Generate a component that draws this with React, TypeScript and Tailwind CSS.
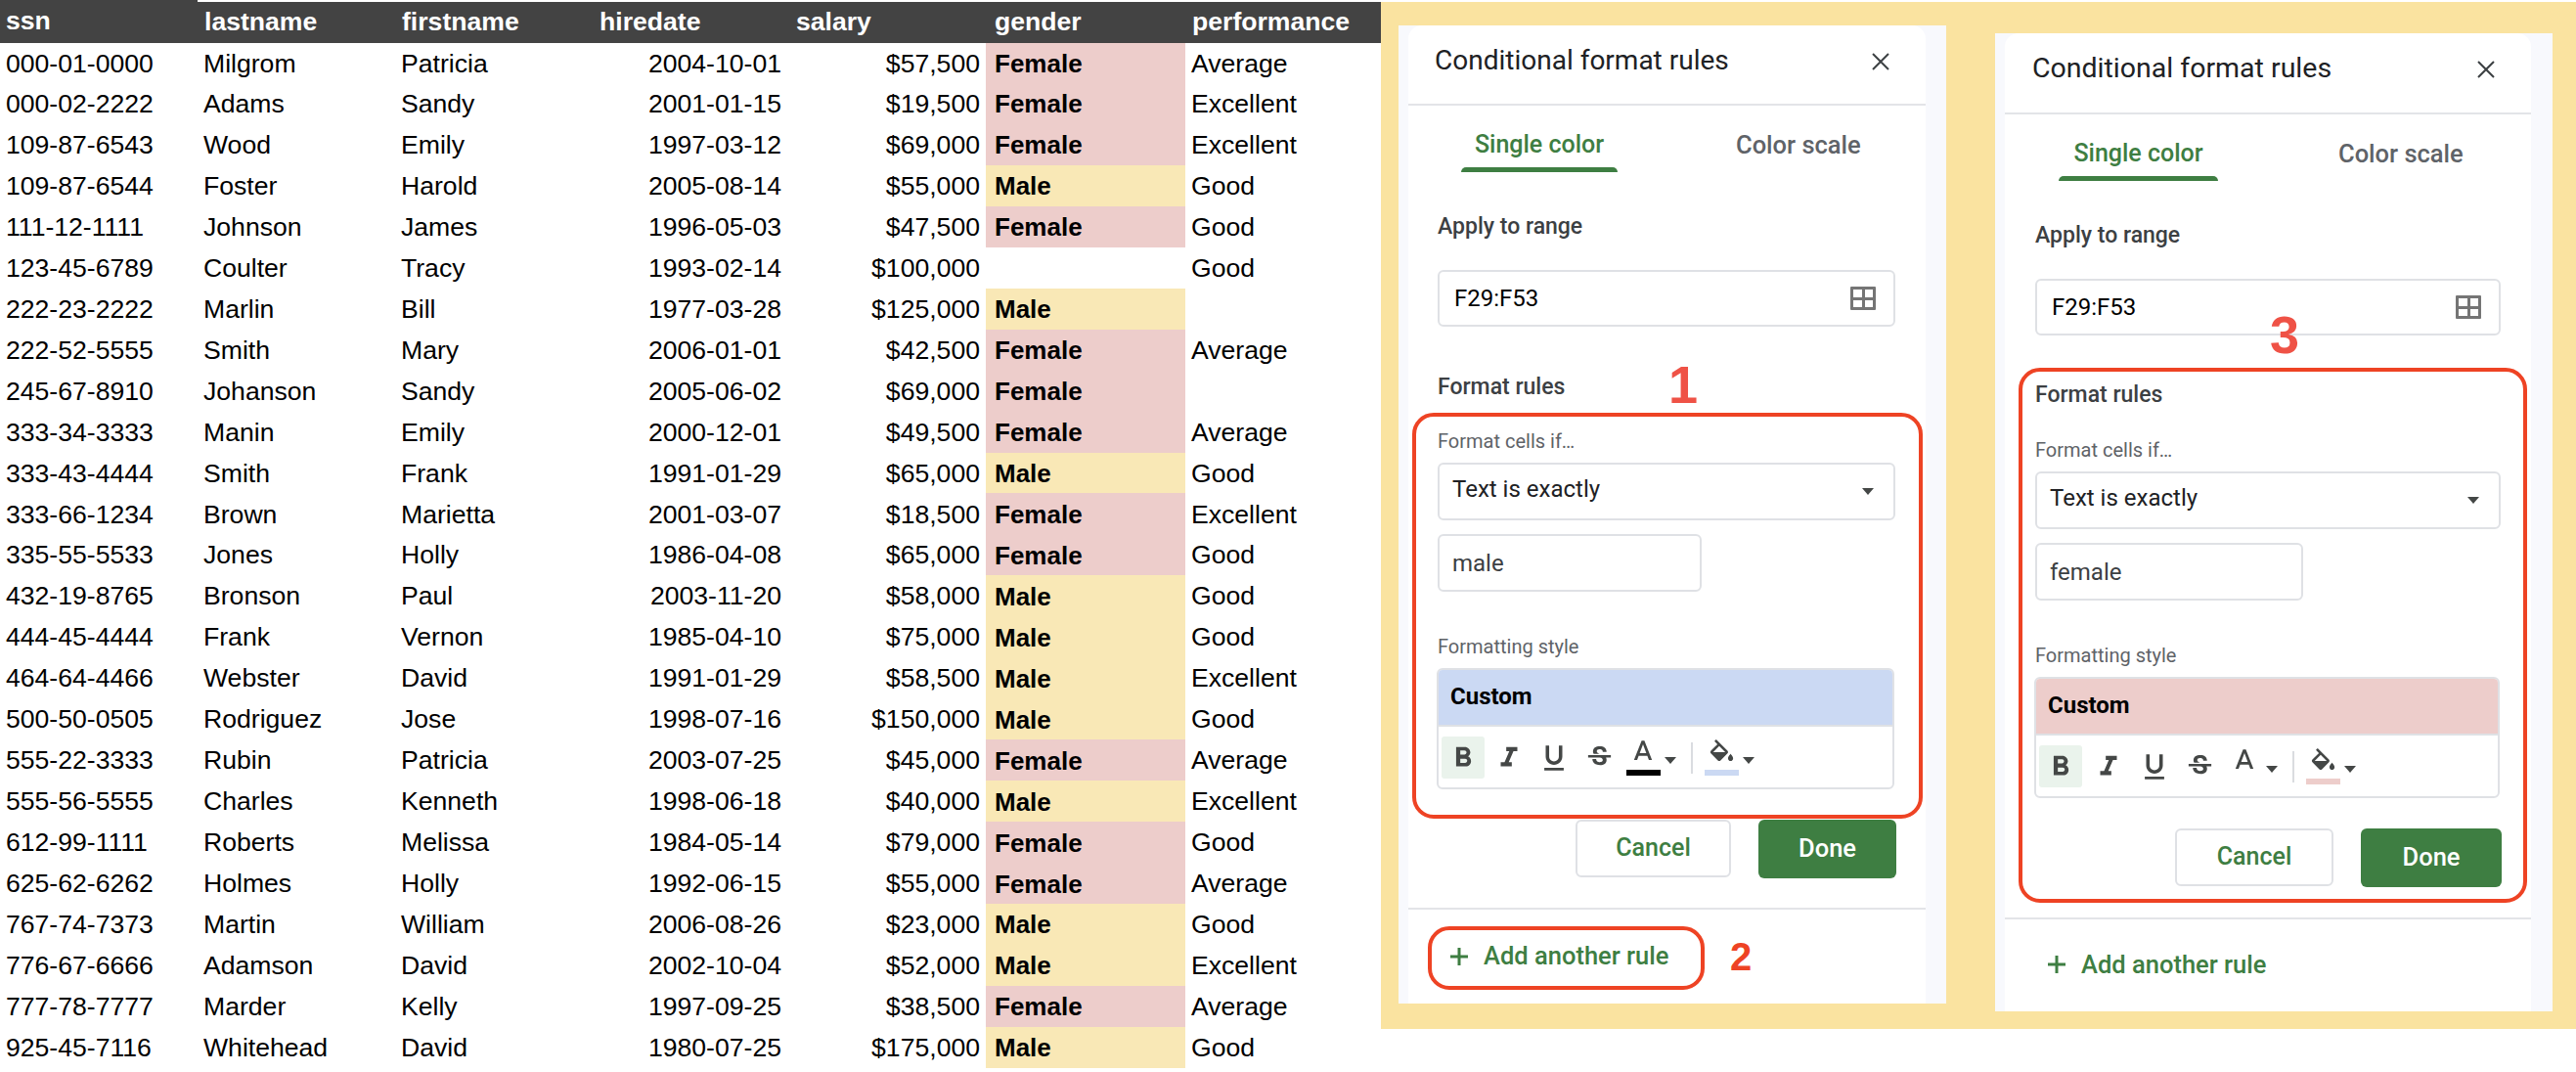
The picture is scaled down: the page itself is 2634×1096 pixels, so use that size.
/**
 * Spreadsheet with two "Conditional format rules" side panels on a yellow band.
 */

import React from 'react';

type Row = [string, string, string, string, string, string, string];

const rows: Row[] = [
  ['000-01-0000', 'Milgrom', 'Patricia', '2004-10-01', '$57,500', 'Female', 'Average'],
  ['000-02-2222', 'Adams', 'Sandy', '2001-01-15', '$19,500', 'Female', 'Excellent'],
  ['109-87-6543', 'Wood', 'Emily', '1997-03-12', '$69,000', 'Female', 'Excellent'],
  ['109-87-6544', 'Foster', 'Harold', '2005-08-14', '$55,000', 'Male', 'Good'],
  ['111-12-1111', 'Johnson', 'James', '1996-05-03', '$47,500', 'Female', 'Good'],
  ['123-45-6789', 'Coulter', 'Tracy', '1993-02-14', '$100,000', '', 'Good'],
  ['222-23-2222', 'Marlin', 'Bill', '1977-03-28', '$125,000', 'Male', ''],
  ['222-52-5555', 'Smith', 'Mary', '2006-01-01', '$42,500', 'Female', 'Average'],
  ['245-67-8910', 'Johanson', 'Sandy', '2005-06-02', '$69,000', 'Female', ''],
  ['333-34-3333', 'Manin', 'Emily', '2000-12-01', '$49,500', 'Female', 'Average'],
  ['333-43-4444', 'Smith', 'Frank', '1991-01-29', '$65,000', 'Male', 'Good'],
  ['333-66-1234', 'Brown', 'Marietta', '2001-03-07', '$18,500', 'Female', 'Excellent'],
  ['335-55-5533', 'Jones', 'Holly', '1986-04-08', '$65,000', 'Female', 'Good'],
  ['432-19-8765', 'Bronson', 'Paul', '2003-11-20', '$58,000', 'Male', 'Good'],
  ['444-45-4444', 'Frank', 'Vernon', '1985-04-10', '$75,000', 'Male', 'Good'],
  ['464-64-4466', 'Webster', 'David', '1991-01-29', '$58,500', 'Male', 'Excellent'],
  ['500-50-0505', 'Rodriguez', 'Jose', '1998-07-16', '$150,000', 'Male', 'Good'],
  ['555-22-3333', 'Rubin', 'Patricia', '2003-07-25', '$45,000', 'Female', 'Average'],
  ['555-56-5555', 'Charles', 'Kenneth', '1998-06-18', '$40,000', 'Male', 'Excellent'],
  ['612-99-1111', 'Roberts', 'Melissa', '1984-05-14', '$79,000', 'Female', 'Good'],
  ['625-62-6262', 'Holmes', 'Holly', '1992-06-15', '$55,000', 'Female', 'Average'],
  ['767-74-7373', 'Martin', 'William', '2006-08-26', '$23,000', 'Male', 'Good'],
  ['776-67-6666', 'Adamson', 'David', '2002-10-04', '$52,000', 'Male', 'Excellent'],
  ['777-78-7777', 'Marder', 'Kelly', '1997-09-25', '$38,500', 'Female', 'Average'],
  ['925-45-7116', 'Whitehead', 'David', '1980-07-25', '$175,000', 'Male', 'Good'],
];

const headers = ['ssn', 'lastname', 'firstname', 'hiredate', 'salary', 'gender', 'performance'];
const gridCols = 'grid grid-cols-[202px_202px_202px_198px_204px_204px_200px]';

function Sheet() {
  return (
    <div className="w-[1412px] shrink-0 font-['Liberation_Sans',sans-serif] text-[26.6px] text-black">
      {/* Header row */}
      <div className={`${gridCols} h-[44px] font-bold text-white`}>
        {headers.map((h, i) => (
          <div
            key={h}
            className={`flex items-center bg-[#434343] ${i === 0 ? 'pl-[6px]' : 'mt-[2px] pl-[7px]'} ${i === 3 ? 'pl-[6px]' : ''} ${i === 4 ? 'pl-[10px]' : ''} ${i === 5 ? 'pl-[9px]' : ''}`}
          >
            {h}
          </div>
        ))}
      </div>
      {/* Data rows, the first is a pixel shorter in the picture */}
      {rows.map((r, i) => {
        const cell = 'flex items-center pt-[2px]';
        return (
          <div key={r[0]} className={`${gridCols} ${i === 0 ? 'h-[40.96px]' : 'h-[41.96px]'} items-stretch`}>
            <div className={`${cell} pl-[6px]`}>{r[0]}</div>
            <div className={`${cell} pl-[6px]`}>{r[1]}</div>
            <div className={`${cell} pl-[6px]`}>{r[2]}</div>
            <div className={`${cell} justify-end pr-[5px]`}>{r[3]}</div>
            <div className={`${cell} justify-end pr-[6px]`}>{r[4]}</div>
            <div
              className={`${cell} pl-[9px] text-[26px] font-bold ${
                r[5] === 'Female' ? 'bg-[#edcdcb]' : r[5] === 'Male' ? 'bg-[#f9e8b6]' : ''
              }`}
            >
              {r[5]}
            </div>
            <div className={`${cell} pl-[6px]`}>{r[6]}</div>
          </div>
        );
      })}
    </div>
  );
}

function Icon({ d, className }: { d: string; className: string }) {
  return (
    <svg viewBox="0 0 24 24" className={className} fill="currentColor">
      <path d={d} fillRule="evenodd" />
    </svg>
  );
}

const BOLD = 'M15.6 10.79c.97-.67 1.65-1.77 1.65-2.79 0-2.26-1.75-4-4-4H7v14h7.04c2.09 0 3.71-1.7 3.71-3.79 0-1.52-.86-2.82-2.15-3.42zM10 6.5h3c.83 0 1.5.67 1.5 1.5s-.67 1.5-1.5 1.5h-3v-3zm3.5 9H10v-3h3.5c.83 0 1.5.67 1.5 1.5s-.67 1.5-1.5 1.5z';
const ITALIC = 'M10 4v3h2.21l-3.42 8H6v3h8v-3h-2.21l3.42-8H18V4z';
const UNDERLINE = 'M12 17c3.31 0 6-2.69 6-6V3h-2.5v8c0 1.93-1.57 3.5-3.5 3.5S8.5 12.93 8.5 11V3H6v8c0 3.31 2.69 6 6 6zm-7 2v2h14v-2H5z';
const STRIKE = 'M7.24 8.75c-.26-.48-.39-1.03-.39-1.67 0-.61.13-1.16.4-1.67.26-.5.63-.93 1.11-1.29.48-.35 1.05-.63 1.7-.83.66-.19 1.39-.29 2.18-.29.81 0 1.54.11 2.21.34.66.22 1.23.54 1.69.94.47.4.83.88 1.08 1.43.25.55.38 1.15.38 1.81h-3.01c0-.31-.05-.59-.15-.85-.09-.27-.24-.49-.44-.68-.2-.19-.45-.33-.75-.44-.3-.1-.66-.16-1.06-.16-.39 0-.74.04-1.03.13-.29.09-.53.21-.72.36-.19.16-.34.34-.44.55-.1.21-.15.43-.15.66 0 .48.25.88.74 1.21.38.25.77.48 1.41.7H7.39c-.05-.08-.11-.17-.15-.25zM21 12v-2H3v2h9.62c.18.07.4.14.55.2.37.17.66.34.87.51.21.17.35.36.43.57.07.2.11.43.11.69 0 .23-.05.45-.14.66-.09.2-.23.38-.42.53-.19.15-.42.26-.71.35-.29.08-.63.13-1.01.13-.43 0-.83-.04-1.18-.13s-.66-.23-.91-.42c-.25-.19-.45-.44-.59-.75-.14-.31-.25-.76-.25-1.21H6.4c0 .55.08 1.13.24 1.58.16.45.37.85.65 1.21.28.35.6.66.98.92.37.26.78.48 1.22.65.44.17.9.3 1.38.39.48.08.96.13 1.44.13.8 0 1.53-.09 2.18-.28s1.21-.45 1.67-.79c.46-.34.82-.77 1.07-1.27s.38-1.07.38-1.71c0-.6-.1-1.14-.31-1.61-.05-.11-.11-.23-.17-.33H21z';
const TEXT_A = 'M11 3L5.5 17h2.25l1.12-3h6.25l1.12 3h2.25L13 3h-2zm-1.38 9L12 5.67 14.38 12H9.62z';
const BUCKET = 'M16.56 8.94L7.62 0 6.21 1.41l2.38 2.38-5.15 5.15c-.59.59-.59 1.54 0 2.12l5.5 5.5c.29.29.68.44 1.06.44s.77-.15 1.06-.44l5.5-5.5c.59-.58.59-1.53 0-2.12zM5.21 10L10 5.21 14.79 10H5.21zM19 11.5s-2 2.17-2 3.5c0 1.1.9 2 2 2s2-.9 2-2c0-1.33-2-3.5-2-3.5z';

function Caret({ className = '' }: { className?: string }) {
  return <div className={`h-0 w-0 border-x-[6px] border-t-[7px] border-x-transparent border-t-[#444746] ${className}`} />;
}

function Toolbar({ btn, textSwatch, fillSwatch }: { btn: string; textSwatch: boolean; fillSwatch: string }) {
  return (
    <div className="flex h-[63px] items-center pl-[3px] text-[#444746]">
      <div className={`${btn} h-[43px]`}>
        <div className="flex h-[43px] w-[44px] items-center justify-center rounded-[3px] bg-[#eaf3ec]">
          <Icon d={BOLD} className="h-[34px] w-[34px]" />
        </div>
      </div>
      <div className={`${btn} flex h-[43px] items-center justify-center`}>
        <Icon d={ITALIC} className="h-[34px] w-[34px]" />
      </div>
      <div className={`${btn} flex h-[43px] items-center justify-center`}>
        <Icon d={UNDERLINE} className="h-[34px] w-[34px]" />
      </div>
      <div className={`${btn} flex h-[43px] items-center justify-center`}>
        <Icon d={STRIKE} className="h-[31px] w-[31px]" />
      </div>
      {/* Text colour */}
      <div className="ml-[4px] flex h-[43px] w-[36px] flex-col items-center justify-between pb-[3px]">
        <Icon d={TEXT_A} className="h-[34px] w-[34px]" />
        <div className={`h-[6px] w-[35px] ${textSwatch ? 'bg-black' : ''}`} />
      </div>
      <Caret className="ml-[4px] mt-[6px]" />
      <div className="ml-[15px] h-[32px] w-[2px] bg-[#dadce0]" />
      {/* Fill colour */}
      <div className="ml-[11px] flex h-[43px] w-[36px] flex-col items-center justify-between pb-[3px] pt-[3px]">
        <Icon d={BUCKET} className="h-[31px] w-[31px]" />
        <div className={`h-[6px] w-[35px] ${fillSwatch}`} />
      </div>
      <Caret className="ml-[4px] mt-[6px]" />
    </div>
  );
}

function GridIcon() {
  return (
    <div className="grid h-[24px] w-[26px] grid-cols-2 gap-[3px] rounded-[1px] bg-[#757575] p-[3px]">
      <div className="bg-white" />
      <div className="bg-white" />
      <div className="bg-white" />
      <div className="bg-white" />
    </div>
  );
}

function Field({ children, className }: { children: React.ReactNode; className: string }) {
  return (
    <div className={`flex items-center rounded-[6px] border-2 border-[#dfe1e5] bg-white ${className}`}>
      {children}
    </div>
  );
}

function PanelHeader({ titleClass, height }: { titleClass: string; height: string }) {
  return (
    <div className={`flex items-start justify-between border-b-2 border-[#e3e4e8] ${height}`}>
      <div className={`mt-[18px] leading-[36px] text-[#202124] ${titleClass}`}>Conditional format rules</div>
      <svg viewBox="0 0 18 18" className="mr-[37px] mt-[28px] h-[18px] w-[18px] text-[#3c4043]" stroke="currentColor" strokeWidth="2" fill="none">
        <path d="M1 1l16 16M17 1L1 17" />
      </svg>
    </div>
  );
}

function Tabs({ underline, color }: { underline: string; color: string }) {
  return (
    <div className="flex h-[68px] items-start">
      <div className={`flex h-[68px] flex-col items-center justify-between ${underline}`}>
        <div className="mt-[24px] text-[25px] font-medium leading-[32px] text-[#3e7e42]">Single color</div>
        <div className="h-[5px] w-full rounded-t-[5px] bg-[#3e7e42]" />
      </div>
      <div className={`mt-[24px] text-[25.5px] font-medium leading-[32px] text-[#5f6368] ${color}`}>Color scale</div>
    </div>
  );
}

const labelStrong = 'text-[23px] font-medium leading-[30px] text-[#3c4043]';
const labelMuted = 'text-[20px] leading-[26px] text-[#5f6368]';

function RuleFields({ value, width, inputWidth }: { value: string; width: string; inputWidth: string }) {
  return (
    <>
      <div className={labelMuted}>Format cells if…</div>
      <Field className={`mt-[9px] h-[59px] justify-between pl-[13px] pr-[20px] ${width}`}>
        <span className="pb-[6px] text-[24px] text-[#202124]">Text is exactly</span>
        <Caret />
      </Field>
      <Field className={`mt-[14px] h-[59px] pl-[13px] ${inputWidth}`}>
        <span className="text-[24px] text-[#3c4043]">{value}</span>
      </Field>
      <div className={`mt-[43px] ${labelMuted}`}>Formatting style</div>
    </>
  );
}

function Preview({ tint, width, btn, textSwatch }: { tint: string; width: string; btn: string; textSwatch: boolean }) {
  return (
    <div className={`-ml-[1px] mt-[9px] h-[124px] overflow-hidden rounded-[6px] border-2 border-[#dfe1e5] bg-white ${width}`}>
      <div className={`flex h-[58px] items-center border-b-2 border-[#dfe1e5] pb-[3px] pl-[12px] text-[24px] font-bold text-black ${tint}`}>
        Custom
      </div>
      <Toolbar btn={btn} textSwatch={textSwatch} fillSwatch={tint} />
    </div>
  );
}

function Buttons({ cancel, done }: { cancel: string; done: string }) {
  return (
    <div className="flex justify-end gap-[28px]">
      <div className={`flex h-[59px] items-center justify-center rounded-[6px] border-2 border-[#dfe1e5] bg-white pb-[2px] text-[25px] font-medium text-[#3e7e42] ${cancel}`}>
        Cancel
      </div>
      <div className={`flex h-[60px] items-center justify-center rounded-[6px] bg-[#3e7e42] pb-[2px] text-[25.5px] font-medium text-white ${done}`}>
        Done
      </div>
    </div>
  );
}

function AddRule() {
  return (
    <div className="flex items-center gap-[16px] text-[25.5px] font-medium text-[#3e7e42]">
      <svg viewBox="0 0 18 18" className="h-[18px] w-[18px]" stroke="currentColor" strokeWidth="3" fill="none">
        <path d="M9 0v18M0 9h18" />
      </svg>
      <span>Add another rule</span>
    </div>
  );
}

function PanelMale() {
  return (
    <div className="relative ml-[18px] mt-[24px] h-[1000px] w-[560px] shrink-0 bg-[#f8f9fd]">
      <div className="ml-[10px] h-full w-[529px] rounded-t-[14px] bg-white">
        <PanelHeader titleClass="ml-[27px] text-[28px]" height="h-[82px]" />
        <div className="ml-[54px]">
          <Tabs underline="w-[160px]" color="ml-[121px]" />
        </div>
        <div className="pl-[30px]">
          <div className={`mt-[41px] ${labelStrong}`}>Apply to range</div>
          <Field className="mt-[29px] h-[58px] w-[468px] justify-between pl-[15px] pr-[18px]">
            <span className="text-[24px] text-black">F29:F53</span>
            <GridIcon />
          </Field>
          <div className={`mt-[47px] ${labelStrong}`}>Format rules</div>
        </div>
        {/* Rule box, callout 1 */}
        <div className="ml-[4px] mt-[11px] w-[522px] rounded-[22px] border-4 border-[#ee4324] bg-white pb-[26px] pl-[22px] pt-[12px]">
          <RuleFields value="male" width="w-[468px]" inputWidth="w-[270px]" />
          <Preview tint="bg-[#cbd9f3]" width="w-[468px]" btn="w-[46px]" textSwatch />
        </div>
        <div className="mt-[1px] pr-[30px]">
          <Buttons cancel="w-[159px]" done="w-[141px]" />
        </div>
        <div className="mt-[30px] h-[2px] bg-[#e3e4e8]" />
        <div className="ml-[20px] mt-[17px] flex items-center">
          {/* Callout 2 */}
          <div className="flex h-[65px] w-[283px] items-center rounded-[22px] border-4 border-[#ee4324] bg-white pb-[4px] pl-[19px]">
            <AddRule />
          </div>
          <span className="-mt-[4px] ml-[26px] font-['Liberation_Sans',sans-serif] text-[40px] font-bold leading-none text-[#ee4324]">2</span>
        </div>
      </div>
      <span className="absolute left-[276px] top-[340px] font-['Liberation_Sans',sans-serif] text-[54px] font-bold leading-none text-[#ef5246]">1</span>
    </div>
  );
}

function PanelFemale() {
  return (
    <div className="relative ml-[50px] mt-[32px] h-[1000px] w-[570px] shrink-0 bg-[#f8f9fd]">
      <div className="ml-[10px] h-full w-[538px] rounded-t-[14px] bg-white">
        <PanelHeader titleClass="ml-[28px] text-[28.5px]" height="h-[83px]" />
        <div className="ml-[55px]">
          <Tabs underline="w-[163px]" color="ml-[123px]" />
        </div>
        <div className="pl-[31px]">
          <div className={`mt-[41px] ${labelStrong}`}>Apply to range</div>
          <Field className="mt-[29px] h-[58px] w-[476px] justify-between pl-[15px] pr-[18px]">
            <span className="text-[24px] text-black">F29:F53</span>
            <GridIcon />
          </Field>
        </div>
        {/* Rule box, callout 3 */}
        <div className="ml-[14px] mt-[33px] w-[520px] rounded-[22px] border-4 border-[#ee4324] bg-white pb-[12px] pl-[13px] pt-[9px]">
          <div className={`mb-[28px] ${labelStrong}`}>Format rules</div>
          <RuleFields value="female" width="w-[476px]" inputWidth="w-[274px]" />
          <Preview tint="bg-[#edcdcb]" width="w-[476px]" btn="w-[47px]" textSwatch={false} />
          <div className="mt-[31px] pr-[22px]">
            <Buttons cancel="w-[162px]" done="w-[144px]" />
          </div>
        </div>
        <div className="mt-[15px] h-[2px] bg-[#e3e4e8]" />
        <div className="ml-[44px] mt-[27px]">
          <AddRule />
        </div>
      </div>
      <span className="absolute left-[281px] top-[281px] font-['Liberation_Sans',sans-serif] text-[54px] font-bold leading-none text-[#ef5246]">3</span>
    </div>
  );
}

export default function App() {
  return (
    <div className="flex min-h-[1096px] w-[2634px] items-start bg-white font-['Roboto',sans-serif]">
      <Sheet />
      <div className="mt-[2px] flex h-[1050px] flex-1 items-start bg-[#fae3a0]">
        <PanelMale />
        <PanelFemale />
      </div>
    </div>
  );
}
